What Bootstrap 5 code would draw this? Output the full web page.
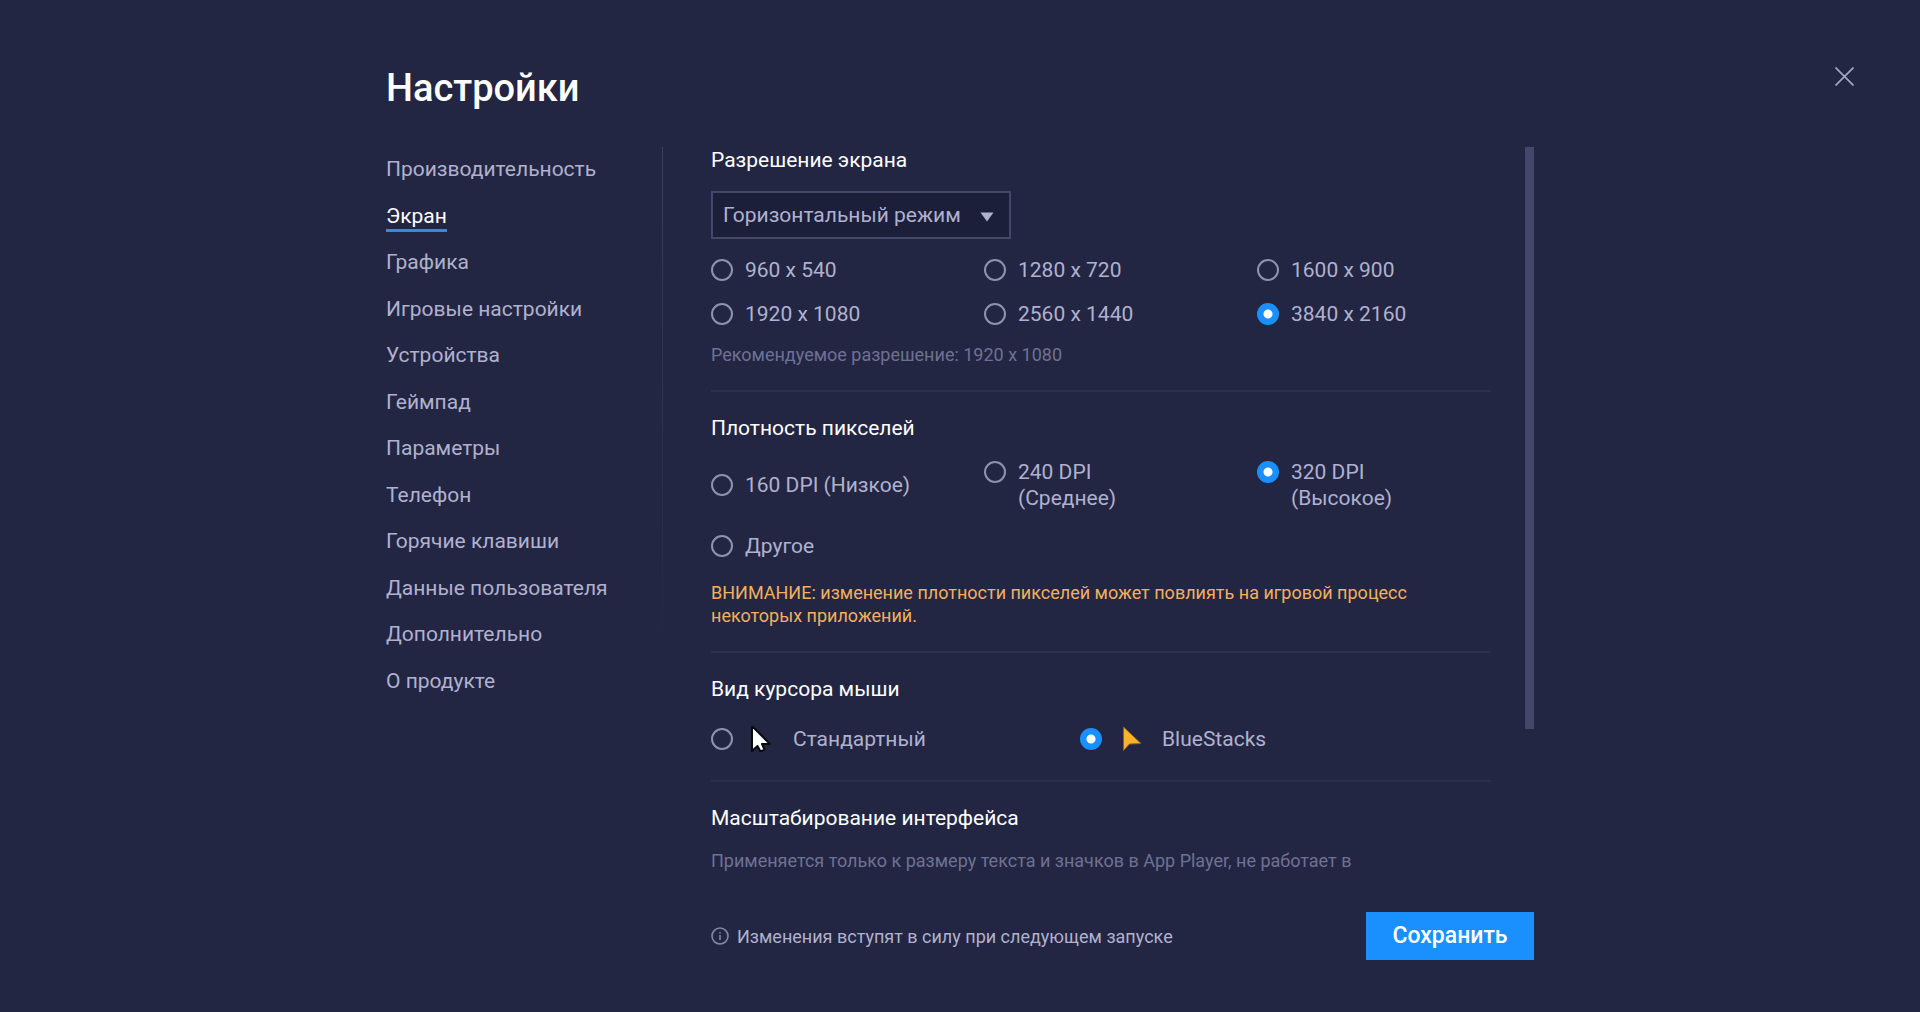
<!DOCTYPE html>
<html lang="ru" data-bs-theme="dark">
<head>
<meta charset="utf-8">
<meta name="viewport" content="width=device-width, initial-scale=1">
<title>Настройки</title>
<link href="https://cdn.jsdelivr.net/npm/bootstrap@5.3.0/dist/css/bootstrap.min.css" rel="stylesheet">
<style>
  :root { --ink: #b0b1cf; --blue: #1a90ff; --rule: #2c2e4c; }
  body { background: #232642; color: var(--ink); font: 400 21px/26px Roboto, "Open Sans", sans-serif; }
  .window { height: 100vh; min-height: 600px; }
  .side-space { flex: 1 1 0; }
  .settings { flex: 0 1 1148px; padding: 66px 0 52px; min-width: 0; }
  .page-title { font-size: 38px; line-height: 44px; font-weight: 500; color: #fff; margin: 0 0 37px; }
  .close-btn { margin: 57px 56px 0 0; padding: 10px; border: 0; background: none; line-height: 0; }
  .side-nav { width: 277px; flex: none; padding: 9px 0 0; border-right: 1px solid; border-image: linear-gradient(#3b3e5e, #232642 520px) 1; }
  .side-list { min-height: 538px; }
  .side-list a { display: inline-block; color: var(--ink); text-decoration: none; }
  .side-list a.current { color: #fff; box-shadow: 0 3px 0 #2f8be6; }
  .content-col { padding-left: 48px; }
  .panel { overflow-y: auto; scrollbar-width: none; padding-right: 34px; }
  .panel::-webkit-scrollbar { display: none; }
  .thumb { width: 9px; height: 80%; background: #45476a; flex: none; }
  .group { margin: 0 0 24px; padding: 0; border: 0; }
  .group-title { float: none; font-size: 21px; line-height: 26px; color: #fff; font-weight: 400; margin: 0 0 18px; }
  .rule { height: 2px; background: var(--rule); border: 0; opacity: 1; margin: 0 0 23px; }
  .mode { position: relative; width: 300px; margin-bottom: 18px; }
  .mode select { width: 100%; height: 48px; padding: 0 40px 0 10px; border: 2px solid #444769; border-radius: 0; appearance: none; background: #1c1f39; color: var(--ink); font-size: 21px; }
  .mode svg { position: absolute; right: 17px; top: 21px; pointer-events: none; }
  .choices { display: grid; grid-template-columns: 35% 35% 30%; row-gap: 18px; align-items: center; }
  .choices.roomy { row-gap: 22px; margin-bottom: 22px; }
  .choice { display: flex; gap: 12px; cursor: pointer; }
  .choice input { appearance: none; flex: none; width: 22px; height: 22px; margin: 2px 0; border: 2px solid #8f91b1; border-radius: 50%; background: transparent; }
  .choice input:checked { border-color: var(--blue); background: radial-gradient(circle, #fff 4px, var(--blue) 5px); }
  .choice.pointer { gap: 16px; flex: 0 0 369px; }
  .pointers { padding: 6px 0 4px; }
  .small-text { font-size: 18px; line-height: 23px; margin: 0; }
  .dim { color: #6f7193; }
  .warn { color: #f0b060; }
  .footer-bar { padding: 37px 0 0 325px; }
  .save-btn { width: 168px; height: 48px; border-radius: 0; background: var(--blue); color: #fff; font-size: 23px; font-weight: 500; padding: 0; }
</style>
<script src="https://cdn.jsdelivr.net/npm/bootstrap@5.3.0/dist/js/bootstrap.bundle.min.js"></script>
</head>
<body>
<div class="window d-flex">
  <div class="side-space"></div>
  <div class="settings d-flex flex-column">
    <h1 class="page-title">Настройки</h1>
    <div class="d-flex flex-fill overflow-hidden">
      <nav class="side-nav" aria-label="Разделы">
        <ul class="side-list list-unstyled d-flex flex-column justify-content-between mb-0">
          <li><a href="#">Производительность</a></li>
          <li><a href="#" class="current" aria-current="page">Экран</a></li>
          <li><a href="#">Графика</a></li>
          <li><a href="#">Игровые настройки</a></li>
          <li><a href="#">Устройства</a></li>
          <li><a href="#">Геймпад</a></li>
          <li><a href="#">Параметры</a></li>
          <li><a href="#">Телефон</a></li>
          <li><a href="#">Горячие клавиши</a></li>
          <li><a href="#">Данные пользователя</a></li>
          <li><a href="#">Дополнительно</a></li>
          <li><a href="#">О продукте</a></li>
        </ul>
      </nav>
      <div class="content-col d-flex flex-fill overflow-hidden">
        <div class="panel flex-fill">
          <fieldset class="group">
            <legend class="group-title">Разрешение экрана</legend>
            <div class="mode">
              <select aria-label="Разрешение экрана"><option>Горизонтальный режим</option></select>
              <svg width="14" height="10" viewBox="0 0 14 10" aria-hidden="true"><path d="M0.5 0.5h13L7 9.5z" fill="#b0b1cf"/></svg>
            </div>
            <div class="choices">
              <label class="choice"><input type="radio" name="res">960 x 540</label>
              <label class="choice"><input type="radio" name="res">1280 x 720</label>
              <label class="choice"><input type="radio" name="res">1600 x 900</label>
              <label class="choice"><input type="radio" name="res">1920 x 1080</label>
              <label class="choice"><input type="radio" name="res">2560 x 1440</label>
              <label class="choice"><input type="radio" name="res" checked>3840 x 2160</label>
            </div>
            <p class="small-text dim mt-3">Рекомендуемое разрешение: 1920 x 1080</p>
          </fieldset>
          <hr class="rule">
          <fieldset class="group">
            <legend class="group-title">Плотность пикселей</legend>
            <div class="choices roomy">
              <label class="choice"><input type="radio" name="dpi">160 DPI (Низкое)</label>
              <label class="choice"><input type="radio" name="dpi"><span>240 DPI<br>(Среднее)</span></label>
              <label class="choice"><input type="radio" name="dpi" checked><span>320 DPI<br>(Высокое)</span></label>
              <label class="choice"><input type="radio" name="dpi">Другое</label>
            </div>
            <p class="small-text warn">ВНИМАНИЕ: изменение плотности пикселей может повлиять на игровой процесс<br>некоторых приложений.</p>
          </fieldset>
          <hr class="rule">
          <fieldset class="group">
            <legend class="group-title">Вид курсора мыши</legend>
            <div class="pointers d-flex">
              <label class="choice pointer"><input type="radio" name="cur">
                <svg width="28" height="26" viewBox="0 0 28 26" aria-hidden="true"><path d="M3 0v25l5.500-5 3 5.500 4-2-2.500-5.500h8z" fill="#fff" stroke="#080a12" stroke-width="2" stroke-linejoin="round"/></svg>
                Стандартный</label>
              <label class="choice pointer"><input type="radio" name="cur" checked>
                <svg width="28" height="26" viewBox="0 0 28 26" aria-hidden="true"><path d="M5.500 1v23.500l6-6.500 11.500-.5z" fill="#fdb22b" stroke="#8a6427" stroke-width="1"/></svg>
                BlueStacks</label>
            </div>
          </fieldset>
          <hr class="rule">
          <h2 class="group-title">Масштабирование интерфейса</h2>
          <p class="small-text dim">Применяется только к размеру текста и значков в App Player, не работает в</p>
        </div>
        <div class="thumb"></div>
      </div>
    </div>
    <div class="footer-bar d-flex align-items-center justify-content-between">
      <div class="small-text d-flex align-items-center gap-2">
        <svg width="18" height="18" viewBox="0 0 18 18" fill="none" stroke="#8486a6" aria-hidden="true"><circle cx="9" cy="9" r="8" stroke-width="1.600"/><path d="M9 8v5M9 5v1.500" stroke-width="1.600"/></svg>
        <span>Изменения вступят в силу при следующем запуске</span>
      </div>
      <button type="button" class="btn save-btn">Сохранить</button>
    </div>
  </div>
  <div class="side-space d-flex justify-content-end align-items-start">
    <button type="button" class="close-btn" aria-label="Закрыть"><svg width="19" height="19" viewBox="0 0 19 19" fill="none" stroke="#a3a5c0" stroke-width="1.700"><path d="M0.500 0.500l18 18M18.500 0.500l-18 18"/></svg></button>
  </div>
</div>
</body>
</html>
